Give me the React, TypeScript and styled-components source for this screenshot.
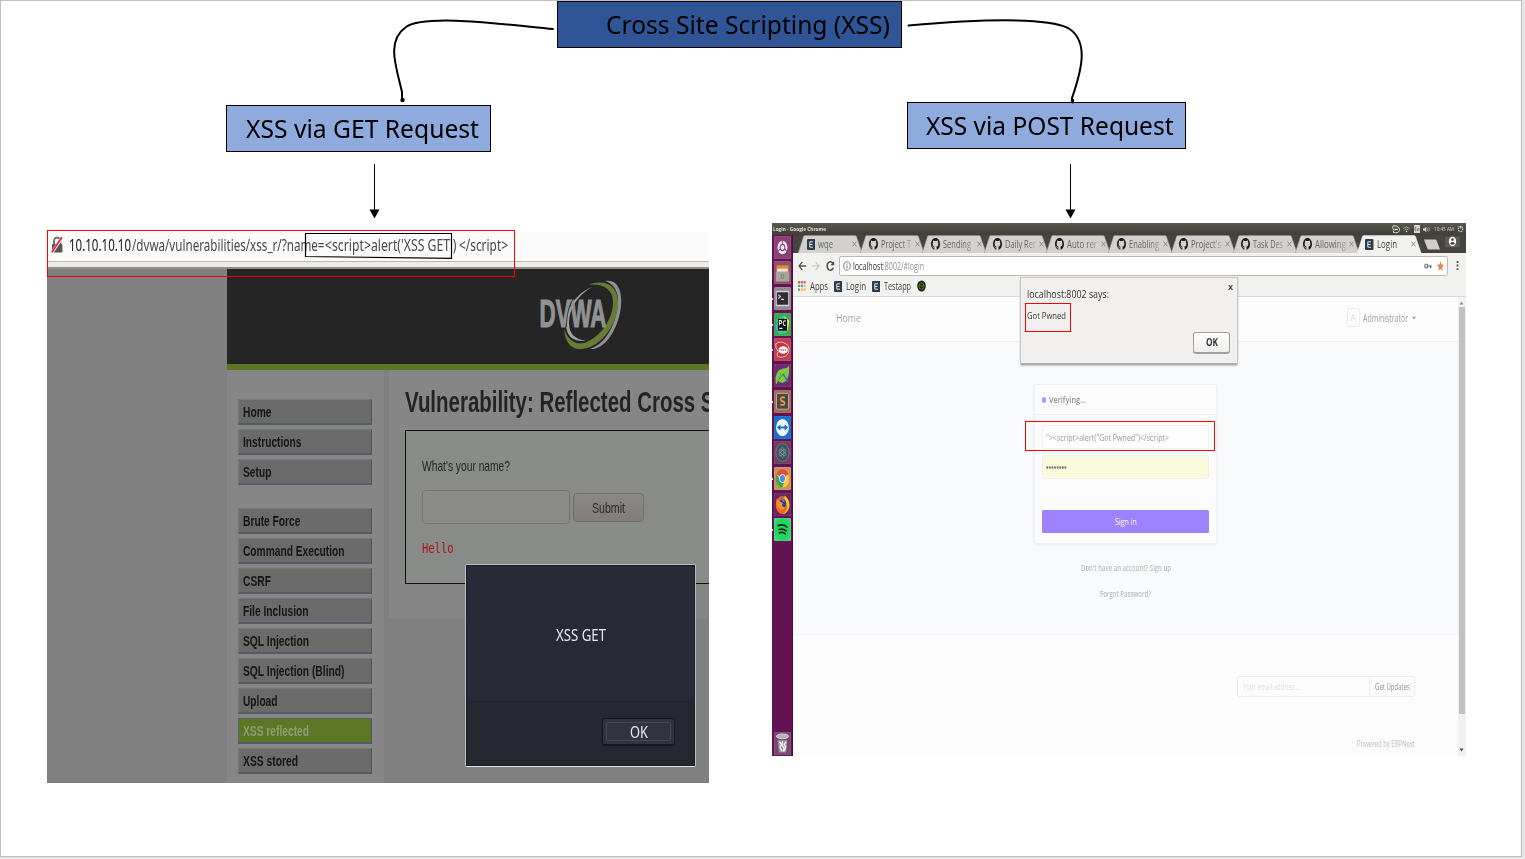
import React, { useLayoutEffect, useRef } from "react";
import styled, { createGlobalStyle, css } from "styled-components";

const GlobalStyle = createGlobalStyle`
  *, *::before, *::after { box-sizing: border-box; }
  html, body { margin: 0; padding: 0; background: #e6e6e6; }
  body { width: 1525px; height: 859px; overflow: hidden; font-family: "Noto Sans", "Open Sans", sans-serif; }
  svg { display: block; flex: none; }
`;

/* ---------- text set to an exact advance width ---------- */

const FitBox = styled.span<{ $w: number }>`
  display: inline-block;
  flex: none;
  width: ${(p) => p.$w}px;
  white-space: pre;
  text-align: left;
`;
const FitInner = styled.span`
  display: inline-block;
  transform-origin: 0 50%;
  white-space: pre;
`;

function Fit({ w, children, className }: { w: number; children: React.ReactNode; className?: string }) {
  const ref = useRef<HTMLSpanElement>(null);
  useLayoutEffect(() => {
    const el = ref.current;
    if (!el) return;
    el.style.transform = "none";
    const natural = el.getBoundingClientRect().width;
    if (natural > 0) el.style.transform = `scaleX(${w / natural})`;
  }, [w, children]);
  return (
    <FitBox $w={w} className={className}>
      <FitInner ref={ref}>{children}</FitInner>
    </FitBox>
  );
}

/* ---------- slide canvas ---------- */

const Slide = styled.main`
  position: relative;
  width: 1522px;
  height: 857px;
  background: #fff;
  border: 1px solid #bfbfbf;
  border-right-color: #b9b9b9;
`;

const Canvas = styled.div`
  position: absolute;
  left: -1px;
  top: -1px;
  width: 1522px;
  height: 857px;
`;

const Node = styled.div<{ $x: number; $y: number; $w: number; $pad: number; $fill: string }>`
  position: absolute;
  left: ${(p) => p.$x}px;
  top: ${(p) => p.$y}px;
  width: ${(p) => p.$w}px;
  height: 47px;
  padding-left: ${(p) => p.$pad}px;
  display: flex;
  align-items: center;
  background: ${(p) => p.$fill};
  border: 1px solid #000;
  color: #000;
  font-size: 25px;
  line-height: 45px;
`;

const Wires = styled.svg`
  position: absolute;
  left: 0;
  top: 0;
`;

const Placed = styled.div<{ $x: number; $y: number }>`
  position: absolute;
  left: ${(p) => p.$x}px;
  top: ${(p) => p.$y}px;
`;

const Highlight = styled.div<{ $x: number; $y: number; $w: number; $h: number }>`
  position: absolute;
  left: ${(p) => p.$x}px;
  top: ${(p) => p.$y}px;
  width: ${(p) => p.$w}px;
  height: ${(p) => p.$h}px;
  border: 1px solid #f80000;
`;

/* ---------- DVWA screenshot ---------- */

const Dvwa = styled.section`
  position: relative;
  width: 662px;
  height: 551px;
  overflow: hidden;
  display: flex;
  flex-direction: column;
  background: #808080;
`;
const UrlBar = styled.div`
  height: 29px;
  flex: none;
  display: flex;
  align-items: center;
  padding: 0 0 3px 4px;
  background: #fcfbfb;
  font-size: 17px;
  line-height: 26px;
  color: #484848;
`;
const UrlHost = styled(Fit)`
  margin: 0 1px 0 5px;
  color: #111;
`;
const UrlTail = styled(Fit)`
  margin-left: 3px;
`;
const ChromeEdge = styled.div`
  height: 8px;
  flex: none;
  background: #efebe7;
  border-top: 1px solid #b8b8b6;
  border-bottom: 2px solid #918e8a;
`;
const Site = styled.div`
  flex: 1;
  margin-left: 180px;
  display: flex;
  flex-direction: column;
`;
const Banner = styled.header`
  height: 101px;
  flex: none;
  background: #252525;
  border-bottom: 6px solid #5c7526;
  padding: 9px 0 0 310px;
`;
const SiteBody = styled.div`
  flex: 1;
  display: flex;
  align-items: stretch;
`;
const Menu = styled.nav`
  width: 157px;
  flex: none;
  background: #868686;
  padding: 29px 0 0 11px;
`;
const MenuGroup = styled.div`
  display: flex;
  flex-direction: column;
  gap: 4px;
  margin-bottom: 23px;
`;
const MenuItem = styled.div<{ $active?: boolean }>`
  width: 134px;
  height: 26px;
  padding-left: 4px;
  font: bold 14.5px/25px "Liberation Sans", sans-serif;
  background: ${(p) => (p.$active ? "#5b7726" : "#6b6b6b")};
  color: ${(p) => (p.$active ? "#8f9c74" : "#151515")};
  border: 1px solid ${(p) => (p.$active ? "#56646a" : "#767676")};
  border-right-color: #4d545e;
  border-bottom: 2px solid #555b66;
`;
const MainCol = styled.div`
  flex: 1;
  height: 248px;
  margin-left: 5px;
  padding: 14px 0 0 16px;
  background: #868686;
`;
const Heading = styled.h1`
  margin: 0 0 10px;
  font: bold 29px/36px "Liberation Sans", sans-serif;
  color: #242424;
`;
const FormPanel = styled.div`
  height: 154px;
  border: 1px solid #101010;
  border-right: 0;
  background: #888b88;
  padding: 24px 0 0 15.5px;
  font: 15px/22px "Liberation Sans", sans-serif;
  color: #242424;
`;
const FormRow = styled.div`
  display: flex;
  align-items: center;
  gap: 3px;
  margin: 12px 0 12px;
  height: 36px;
`;
const NameInput = styled.div`
  width: 148px;
  height: 34px;
  border: 1px solid #75716e;
  border-radius: 4px;
  background: #8b8b8a;
`;
const SubmitButton = styled.div`
  width: 71px;
  height: 29px;
  margin-top: 1px;
  border: 1px solid #716d6a;
  border-radius: 4px;
  background: linear-gradient(#8a8886, #807d7a);
  display: flex;
  justify-content: center;
  line-height: 28px;
  color: #2b2b2b;
`;
const Hello = styled.div`
  font: 14px/22px "DejaVu Sans Mono", monospace;
  color: #a91414;
`;
const Alert = styled.div`
  width: 231px;
  height: 203px;
  display: flex;
  flex-direction: column;
  border: 1px solid #bcbfc0;
  border-bottom-color: #e2e3e3;
  border-radius: 2px;
  background: #282a35;
  color: #e9ebed;
  font-size: 15.5px;
`;
const AlertBody = styled.div`
  height: 137px;
  display: flex;
  align-items: center;
  justify-content: center;
  padding: 2px 0 0 0;
  border: 1px solid #1c1e2a;
  border-bottom: 1px solid #232531;
`;
const AlertFoot = styled.div`
  flex: 1;
  display: flex;
  justify-content: flex-end;
  padding: 16px 19px 0 0;
  background: #252830;
  border: 1px solid #1b1d26;
  border-top: 0;
`;
const AlertOk = styled.div`
  width: 73px;
  height: 28px;
  padding: 3px;
  border: 1px solid #15171c;
  border-bottom-width: 2px;
  border-radius: 3px;
  background: #31343f;
`;
const AlertOkInner = styled.div`
  height: 19px;
  padding-left: 1px;
  border: 1px solid #444957;
  border-radius: 2px;
  display: flex;
  justify-content: center;
  line-height: 18px;
`;

function LockIcon() {
  return (
    <svg width="13" height="18" viewBox="0 0 13 18">
      <path d="M3 8V5.2a3.2 3.6 0 0 1 6.4 0V8" fill="none" stroke="#666" strokeWidth="1.8" />
      <rect x="1" y="8" width="10.4" height="8.4" rx="1" fill="#555" />
      <path d="M1 16.4L11.3 1.4" stroke="#fff" strokeWidth="3" />
      <path d="M.8 16.2L11 1.2" stroke="#e2224c" strokeWidth="1.8" />
    </svg>
  );
}

function DvwaLogo() {
  return (
    <svg width="90" height="76" viewBox="0 0 90 76">
      <path d="M68 3C82 0 88 17 82 39C77 57 66 72 53 71C65 67 75 54 79 37C84 19 80 7 68 3Z" fill="#919191" />
      <path d="M51 7C66 1 80 6 81 23C82 43 66 69 45 71C34 72 28 64 27 51C31 62 38 67 47 65C61 61 76 43 76 24C76 11 65 5 51 7Z" fill="#677d36" />
      <path d="M55 9C41 17 32 30 32 45C32 56 38 61 49 63C36 64 29 58 29 46C29 30 40 15 55 9Z" fill="#a2a2a2" />
      <g transform="translate(2.5 49) scale(1 1.68)" fontFamily="Liberation Sans, sans-serif" fontWeight="bold" fontSize="23">
        <text textLength="67" lengthAdjust="spacingAndGlyphs" fill="#929292" stroke="#929292" strokeWidth=".7">DVWA</text>
      </g>
      <path d="M36 21C32 28 29.5 37 29.5 49" fill="none" stroke="#252525" strokeWidth=".8" />
    </svg>
  );
}

const MENU: [string, number][][] = [
  [["Home", 28.5], ["Instructions", 58.5], ["Setup", 28.5]],
  [
    ["Brute Force", 57.5],
    ["Command Execution", 101.5],
    ["CSRF", 28],
    ["File Inclusion", 65.5],
    ["SQL Injection", 66],
    ["SQL Injection (Blind)", 101.5],
    ["Upload", 34.5],
    ["XSS reflected", 66],
    ["XSS stored", 55],
  ],
];

function DvwaShot() {
  return (
    <Dvwa>
      <UrlBar>
        <LockIcon />
        <UrlHost w={62}>10.10.10.10</UrlHost>
        <Fit w={192.5}>/dvwa/vulnerabilities/xss_r/?name=</Fit>
        <Fit w={131.5}>{"<script>alert('XSS GET')"}</Fit>
        <UrlTail w={49}>{"</script>"}</UrlTail>
      </UrlBar>
      <ChromeEdge />
      <Site>
        <Banner>
          <DvwaLogo />
        </Banner>
        <SiteBody>
          <Menu>
            {MENU.map((group, i) => (
              <MenuGroup key={i}>
                {group.map(([label, w]) => (
                  <MenuItem key={label} $active={label === "XSS reflected"}>
                    <Fit w={w}>{label}</Fit>
                  </MenuItem>
                ))}
              </MenuGroup>
            ))}
          </Menu>
          <MainCol>
            <Heading>
              <Fit w={309.5}>Vulnerability: Reflected Cross S</Fit>
            </Heading>
            <FormPanel>
              <Fit w={88}>What's your name?</Fit>
              <FormRow>
                <NameInput />
                <SubmitButton>
                  <Fit w={33}>Submit</Fit>
                </SubmitButton>
              </FormRow>
              <Hello>
                <Fit w={31.5}>Hello</Fit>
              </Hello>
            </FormPanel>
          </MainCol>
        </SiteBody>
      </Site>
    </Dvwa>
  );
}

/* ---------- Ubuntu desktop with Chrome ---------- */

const Desktop = styled.section`
  width: 694px;
  height: 533px;
  display: flex;
  flex-direction: column;
  font-family: "Open Sans", "Noto Sans", sans-serif;
  overflow: hidden;
`;
const TopBar = styled.div`
  height: 12px;
  flex: none;
  display: flex;
  align-items: center;
  padding: 0 2px 0 1px;
  background: linear-gradient(#5b5a51, #45443e 70%, #3f3e39);
  color: #e4e1d8;
  font-size: 6px;
  font-weight: bold;
  line-height: 11px;
`;
const Tray = styled.div`
  margin-left: auto;
  display: flex;
  align-items: center;
  gap: 3.5px;
  color: #d5d2c9;
  font-weight: normal;
`;
const DesktopRow = styled.div`
  flex: 1;
  display: flex;
  min-height: 0;
`;
const Launcher = styled.aside`
  width: 21px;
  flex: none;
  background: #641253;
  border-right: 1px solid #4f0d41;
  display: flex;
  flex-direction: column;
  align-items: center;
  gap: 2.72px;
  padding: 0.5px 0 1px;
`;
const LauncherIcon = styled.div<{ $bg: string; $last?: boolean; $running?: boolean }>`
  position: relative;
  width: 17px;
  height: 23px;
  flex: none;
  border-radius: 1.5px;
  background: ${(p) => p.$bg};
  box-shadow: inset 0 0 1px rgba(255, 255, 255, 0.55);
  ${(p) => p.$last && css`margin-top: auto;`}
  ${(p) => p.$running && css`
    &::before {
      content: "";
      position: absolute;
      left: -2px;
      top: 11px;
      width: 1.5px;
      height: 2px;
      background: #f0e6ee;
    }
  `}
`;
const Browser = styled.div`
  flex: 1;
  min-width: 0;
  display: flex;
  flex-direction: column;
  background: #f1f1ef;
`;
const TabStrip = styled.div`
  height: 18px;
  flex: none;
  display: flex;
  background: #45443e;
  padding-left: 5px;
`;
const TabShell = styled.div`
  position: relative;
  width: 62.1px;
  height: 18px;
  flex: none;
  font-size: 10.5px;
  line-height: 18px;
`;
const TabShape = styled.svg`
  position: absolute;
  left: 0;
  top: 0;
`;
const TabContent = styled.div<{ $active?: boolean }>`
  position: relative;
  display: flex;
  align-items: center;
  height: 18px;
  padding-left: 8.5px;
  color: ${(p) => (p.$active ? "#444" : "#66645f")};
`;
const TabTitle = styled.div<{ $fade?: boolean }>`
  width: 34px;
  height: 18px;
  margin-left: 3px;
  ${(p) => p.$fade && css`
    -webkit-mask-image: linear-gradient(90deg, #000 60%, rgba(0, 0, 0, 0.15));
    mask-image: linear-gradient(90deg, #000 60%, rgba(0, 0, 0, 0.15));
  `}
`;
const StripEnd = styled.div`
  display: flex;
  gap: 2px;
  padding: 0 0 0 5px;
`;
const Toolbar = styled.div`
  height: 24px;
  flex: none;
  display: flex;
  align-items: center;
  padding: 1px 0 0 5px;
  font-size: 10.5px;
`;
const NavIcons = styled.div`
  width: 41px;
  flex: none;
`;
const Omnibox = styled.div`
  width: 609px;
  height: 20px;
  display: flex;
  align-items: center;
  padding: 0 3px 0 3px;
  border: 1px solid #bbbab6;
  border-radius: 2px;
  background: #fff;
  color: #8e8e8e;
  line-height: 18px;
`;
const OmniHost = styled(Fit)`
  margin-left: 2px;
  color: #333;
`;
const OmniIcons = styled.div`
  margin-left: auto;
  display: flex;
  align-items: center;
  gap: 5px;
`;
const Kebab = styled.div`
  margin-left: 8px;
`;
const Bookmarks = styled.div`
  height: 20px;
  flex: none;
  display: flex;
  align-items: center;
  padding: 0 0 1px 5px;
  border-bottom: 1px solid #d9d9d7;
  font-size: 10.5px;
  line-height: 18px;
  color: #424242;
`;
const BookmarkLabel = styled(Fit)`
  margin: 0 5.5px 0 4px;
`;
const View = styled.div`
  flex: 1;
  display: flex;
  min-height: 0;
`;
const Page = styled.div`
  flex: 1;
  display: flex;
  flex-direction: column;
`;
const PageNav = styled.div`
  height: 45px;
  flex: none;
  display: flex;
  align-items: center;
  padding: 0 42.5px 3px 43px;
  background: #fcfcfc;
  border-bottom: 1px solid #f1f2f4;
  color: #a2a6ab;
  font-size: 11.5px;
`;
const UserMenu = styled.div`
  margin-left: auto;
  display: flex;
  align-items: center;
  gap: 3.5px;
  font-size: 10px;
  color: #9ca1a7;
`;
const Avatar = styled.div`
  width: 13px;
  height: 19px;
  border: 1px solid #eceef0;
  border-radius: 2px;
  display: flex;
  align-items: center;
  justify-content: center;
  font-size: 9px;
  color: #dddfe3;
`;
const Hero = styled.div`
  height: 293px;
  flex: none;
  display: flex;
  flex-direction: column;
  align-items: center;
  padding-top: 42px;
  background: #f9fafc;
  border-bottom: 1px solid #f1f3f6;
  font-size: 9px;
`;
const Card = styled.div`
  width: 183px;
  height: 160px;
  flex: none;
  margin-right: 1px;
  border: 1px solid #eef0f3;
  border-radius: 2px;
  background: #fcfcfd;
  box-shadow: 0 1px 3px rgba(40, 50, 80, 0.07);
`;
const CardHead = styled.div`
  height: 30px;
  display: flex;
  align-items: center;
  gap: 3px;
  padding-left: 7px;
  border-bottom: 1px solid #f0f1f3;
  font-weight: 600;
  color: #8d9298;
`;
const Dot = styled.i`
  width: 4px;
  height: 6px;
  border-radius: 50%;
  background: #ab98fb;
`;
const CardBody = styled.div`
  padding: 10px 7px 0;
`;
const Field = styled.div<{ $fill?: string }>`
  height: 24px;
  margin-bottom: 6px;
  padding: 0 0 0 3px;
  display: flex;
  align-items: center;
  border: 1px solid #eef0f2;
  border-radius: 2px;
  background: ${(p) => p.$fill || "#fdfdfd"};
  color: #989b9f;
`;
const SignIn = styled.div`
  height: 23px;
  margin-top: 31px;
  padding-left: 1px;
  display: flex;
  align-items: center;
  justify-content: center;
  border-radius: 1.5px;
  background: #9f82fd;
  color: #fff;
`;
const HeroLink = styled.div<{ $gap: number }>`
  margin-top: ${(p) => p.$gap}px;
  height: 12px;
  line-height: 12px;
  font-size: 8.5px;
  font-weight: 600;
  color: #b9bdc4;
`;
const Footer = styled.footer`
  flex: 1;
  display: flex;
  flex-direction: column;
  align-items: flex-end;
  padding: 41px 43px 0 0;
  background: #fcfcfc;
  font-size: 9px;
`;
const Subscribe = styled.div`
  width: 178px;
  height: 21px;
  display: flex;
  border: 1px solid #eeeff0;
  border-radius: 1.5px;
  line-height: 19px;
  color: #dddfe2;
`;
const SubInput = styled.div`
  width: 132px;
  padding-left: 5px;
  border-right: 1px solid #eeeff0;
`;
const SubButton = styled.div`
  padding-left: 5px;
  color: #8c9096;
`;
const Powered = styled.div`
  margin-top: 41px;
  font-size: 8.5px;
  line-height: 12px;
  color: #b9bcc1;
`;
const Scrollbar = styled.div`
  width: 8px;
  flex: none;
  display: flex;
  flex-direction: column;
  align-items: center;
  background: #f1f1f1;
  padding: 4px 1px 4px 0;
`;
const Thumb = styled.div`
  width: 6px;
  height: 407px;
  margin-top: 2px;
  background: #c1c1c1;
`;
const DownArrow = styled.div`
  margin-top: auto;
`;

const JsDialog = styled.div`
  width: 218px;
  height: 88px;
  padding: 8px 7px 0 6px;
  display: flex;
  flex-direction: column;
  border: 1px solid #c6c5c3;
  border-bottom: 2px solid #aeadab;
  border-radius: 1px 1px 2px 2px;
  background: #f1f0ee;
  box-shadow: 0 1px 2px rgba(0, 0, 0, 0.22);
  font-family: "Open Sans", sans-serif;
  color: #363636;
`;
const JsTitle = styled.div`
  display: flex;
  justify-content: space-between;
  font-size: 11.5px;
  line-height: 16px;
`;
const JsClose = styled.span`
  margin: -7px -3px 0 0;
  font-size: 9px;
  font-weight: 600;
`;
const JsText = styled.div`
  margin-top: 7px;
  font-size: 9.5px;
  line-height: 14px;
`;
const JsOk = styled.div`
  align-self: flex-end;
  width: 37px;
  height: 22px;
  margin-top: 9px;
  border: 1px solid #a09f9d;
  border-bottom-width: 2px;
  border-radius: 3px;
  background: linear-gradient(#fdfdfd, #eeeeed);
  display: flex;
  justify-content: center;
  font-size: 10px;
  font-weight: bold;
  line-height: 19px;
`;

function GithubMark() {
  return (
    <svg width="9" height="12" viewBox="0 0 16 16" preserveAspectRatio="none">
      <path fill="#1b1b1b" d="M8 0C3.58 0 0 3.58 0 8c0 3.54 2.29 6.53 5.47 7.59.4.07.55-.17.55-.38v-1.49c-2.01.37-2.53-.49-2.69-.94-.09-.23-.48-.94-.82-1.13-.28-.15-.68-.52-.01-.53.63-.01 1.08.58 1.23.82.72 1.21 1.87.87 2.33.66.07-.52.28-.87.51-1.07-1.78-.2-3.64-.89-3.64-3.95 0-.87.31-1.59.82-2.15-.08-.2-.36-1.02.08-2.12 0 0 .67-.21 2.2.82A7.7 7.7 0 0 1 8 3.86c.68 0 1.36.09 2 .27 1.53-1.04 2.2-.82 2.2-.82.44 1.1.16 1.92.08 2.12.51.56.82 1.27.82 2.15 0 3.07-1.87 3.75-3.65 3.95.29.25.54.73.54 1.48v2.2c0 .21.15.46.55.38A8 8 0 0 0 16 8c0-4.42-3.58-8-8-8z" />
    </svg>
  );
}

function EMark() {
  return (
    <svg width="8.5" height="11" viewBox="0 0 8.5 11">
      <rect width="8.5" height="11" rx="1" fill="#303c4c" />
      <path d="M6 2.8H2.8v5.4H6M2.8 5.5h2.8" fill="none" stroke="#dfe4ea" strokeWidth="1" />
    </svg>
  );
}

function CloseX() {
  return (
    <svg width="5" height="6" viewBox="0 0 5 6">
      <path d="M.5.6l4 4.8M4.5.6l-4 4.8" stroke="#85837e" strokeWidth=".9" />
    </svg>
  );
}

const TABS: { title: string; w: number; e?: boolean; fade?: boolean; active?: boolean }[] = [
  { title: "wqe", w: 15, e: true },
  { title: "Project T", w: 30, fade: true },
  { title: "Sending", w: 28, fade: true },
  { title: "Daily Rer", w: 31, fade: true },
  { title: "Auto rer", w: 30, fade: true },
  { title: "Enabling", w: 30, fade: true },
  { title: "Project's", w: 30, fade: true },
  { title: "Task Des", w: 30, fade: true },
  { title: "Allowing", w: 31, fade: true },
  { title: "Login", w: 20, e: true, active: true },
];

function Tab({ tab }: { tab: (typeof TABS)[number] }) {
  return (
    <TabShell>
      <TabShape width="65" height="18" viewBox="0 0 65 18">
        <path
          d="M0 18.5L5.5 1.6Q6 .6 7 .6H57Q58 .6 58.5 1.6L64.3 18.5Z"
          fill={tab.active ? "#f1f1ef" : "#d3d1cd"}
          stroke={tab.active ? "#f1f1ef" : "#8e8c86"}
          strokeWidth=".5"
        />
      </TabShape>
      <TabContent $active={tab.active}>
        {tab.e ? <EMark /> : <GithubMark />}
        <TabTitle $fade={tab.fade}>
          <Fit w={tab.w}>{tab.title}</Fit>
        </TabTitle>
        <CloseX />
      </TabContent>
    </TabShell>
  );
}

const APP_TILES: { name: string; bg: string; running?: boolean; last?: boolean; art: React.ReactNode }[] = [
  {
    name: "dash",
    bg: "#8a4079",
    art: (
      <>
        <circle cx="24" cy="24" r="14" fill="#f3eaf1" />
        <circle cx="24" cy="24" r="6.5" fill="none" stroke="#8a4079" strokeWidth="3" />
        <path d="M24 10v7M12 31l6-4M36 31l-6-4" stroke="#8a4079" strokeWidth="2.5" />
      </>
    ),
  },
  {
    name: "files",
    bg: "#8c5268",
    art: (
      <>
        <path d="M7 9h34v14H7z" fill="#e38742" />
        <path d="M9 16h30v7H9z" fill="#f3e6d6" />
        <path d="M5 22h38v21H5z" fill="#a9a39d" />
        <circle cx="24" cy="32" r="4" fill="none" stroke="#77726d" strokeWidth="2" />
      </>
    ),
  },
  {
    name: "terminal",
    bg: "#8f8794",
    running: true,
    art: (
      <>
        <rect x="5" y="8" width="38" height="32" rx="2" fill="#d5d2d3" />
        <rect x="8" y="11" width="32" height="26" fill="#2f2d30" />
        <path d="M12 16l6 4-6 4M20 26h8" fill="none" stroke="#e9e9e9" strokeWidth="2.5" />
      </>
    ),
  },
  {
    name: "pycharm",
    bg: "#38a852",
    running: true,
    art: (
      <>
        <path d="M6 14L28 5l14 10-6 26-20 3z" fill="#2fd58d" />
        <path d="M30 7l13 9-4 22-12-14z" fill="#e5ef52" />
        <path d="M5 26l14-7 3 24-14-5z" fill="#45bedb" />
        <rect x="11" y="12" width="26" height="25" fill="#111" />
        <path d="M15 26V16h4q3 0 3 3t-3 3h-4M33 17q-7-2-7 4t7 4M15 32h9" fill="none" stroke="#fff" strokeWidth="2.4" />
      </>
    ),
  },
  {
    name: "chat",
    bg: "#bb4351",
    running: true,
    art: (
      <>
        <path d="M5 12q18-9 36 5 5 14-9 21-16 5-24-2l4-7Q3 20 5 12z" fill="#c9303c" stroke="#eedcdd" strokeWidth="2" />
        <ellipse cx="26" cy="25" rx="13" ry="8" fill="#fff" />
        <circle cx="20" cy="25" r="1.8" fill="#c9303c" />
        <circle cx="26" cy="25" r="1.8" fill="#c9303c" />
        <circle cx="32" cy="25" r="1.8" fill="#c9303c" />
      </>
    ),
  },
  {
    name: "leaf",
    bg: "#6d2c6b",
    art: (
      <>
        <path d="M5 40Q1 14 23 10q12 0 20-6 1 34-20 35-9 0-12-4l-3 7z" fill="#7ec84b" />
        <path d="M9 36L30 18M18 19l3 8M14 26l2 5" stroke="#4d932c" strokeWidth="2" fill="none" />
        <path d="M24 22l14 16 3-3-14-15z" fill="#3d74b4" />
      </>
    ),
  },
  {
    name: "sublime",
    bg: "#a06f48",
    running: true,
    art: (
      <>
        <rect x="7" y="7" width="34" height="33" rx="3" fill="#484646" stroke="#c4bdb6" strokeWidth="2" />
        <path d="M31 16q-12-3-12 3 0 4 6 5t5 4q-1 5-12 2" fill="none" stroke="#f09a3a" strokeWidth="4" />
      </>
    ),
  },
  {
    name: "teamviewer",
    bg: "#1670cf",
    art: (
      <>
        <circle cx="24" cy="24" r="18" fill="#f6fafd" />
        <path d="M8 24l10-7v5h12v-5l10 7-10 7v-5H18v5z" fill="#1670cf" />
      </>
    ),
  },
  {
    name: "atom",
    bg: "#6c3f6b",
    art: (
      <>
        <circle cx="24" cy="24" r="19" fill="#44525c" stroke="#77808a" strokeWidth="2" />
        <g fill="none" stroke="#83a6ac" strokeWidth="1.4">
          <ellipse cx="24" cy="24" rx="4" ry="11" />
          <ellipse cx="24" cy="24" rx="4" ry="11" transform="rotate(60 24 24)" />
          <ellipse cx="24" cy="24" rx="4" ry="11" transform="rotate(120 24 24)" />
        </g>
      </>
    ),
  },
  {
    name: "chrome",
    bg: "#c0995a",
    running: true,
    art: (
      <>
        <circle cx="24" cy="24" r="19" fill="#fbc92d" />
        <path d="M24 24L7.5 14.5A19 19 0 0 1 40.5 14.5z" fill="#e44b3c" />
        <path d="M7.5 14.5A19 19 0 0 0 24 43l6-16-14-1z" fill="#38a556" />
        <circle cx="24" cy="24" r="9" fill="#fff" />
        <circle cx="24" cy="24" r="7.3" fill="#4a8af0" />
      </>
    ),
  },
  {
    name: "firefox",
    bg: "#6a2663",
    art: (
      <>
        <circle cx="24" cy="25" r="19" fill="#f1641f" />
        <path d="M30 5q16 9 13 24-4 13-19 15 14-6 13-17-1-9-8-14z" fill="#fdc52c" />
        <circle cx="25" cy="22" r="9" fill="#2e3d93" />
        <path d="M7 13q7 1 11 6l8 2-4 4q2 6 10 4-6 9-15 5Q5 29 7 13z" fill="#fb9129" />
        <path d="M20 10l6 2 5 7-6-1z" fill="#3f8fe0" />
      </>
    ),
  },
  {
    name: "spotify",
    bg: "radial-gradient(#1ed760 55%, #6bcf92)",
    running: true,
    art: (
      <path d="M12 16q14-4 25 3M14 24q11-3 21 3M15 31q10-3 17 2" fill="none" stroke="#16251b" strokeWidth="3.6" strokeLinecap="round" />
    ),
  },
  {
    name: "trash",
    bg: "#77476f",
    last: true,
    art: (
      <>
        <ellipse cx="24" cy="9" rx="17" ry="5" fill="#b9b2b8" stroke="#e6e2e5" strokeWidth="2" />
        <path d="M10 17h28l-4 26H14z" fill="#9a929a" />
        <path d="M15 20l6 6-4 6 6 8M24 19l-1 9 5 5-2 8M34 20l-5 6 4 5-4 9" fill="none" stroke="#f0eef0" strokeWidth="3.5" />
      </>
    ),
  },
];

function DesktopShot() {
  return (
    <Desktop>
      <TopBar>
        <Fit w={53}>Login - Google Chrome</Fit>
        <Tray>
          <svg width="8" height="9" viewBox="0 0 8 9">
            <path d="M1 .8q4-.6 6 2t-1 4.6Q3 8.5 1 7l1-1.4Q0 3 1 .8z" fill="none" stroke="#e8e5dd" strokeWidth=".9" />
            <path d="M2.6 4.4h3" stroke="#fff" strokeWidth="1.2" />
          </svg>
          <svg width="7" height="7" viewBox="0 0 7 7">
            <path d="M.3 2.4q3.2-2.8 6.4 0M1.5 4q2-1.7 4 0" fill="none" stroke="#aaa79f" />
            <circle cx="3.5" cy="5.5" r=".8" fill="#ddd" />
          </svg>
          <svg width="6" height="8" viewBox="0 0 6 8">
            <rect width="6" height="8" rx=".6" fill="#dedbd2" />
            <path d="M2.5 2.2H1v3.6h1.5M1 4h1.3M3.6 6V3.6h1.4V6" fill="none" stroke="#55534c" strokeWidth=".6" />
          </svg>
          <svg width="7" height="7" viewBox="0 0 7 7">
            <path d="M0 2.4h1.4L3.3.7v5.6L1.4 4.6H0z" fill="#d8d5cc" />
            <path d="M4.4 2q1 1.5 0 3M5.6 1q1.6 2.5 0 5" fill="none" stroke="#b5b2aa" strokeWidth=".7" />
          </svg>
          <Fit w={20}>10:45 AM</Fit>
          <svg width="7" height="8" viewBox="0 0 7 8">
            <ellipse cx="3.5" cy="4" rx="2.2" ry="2.7" fill="none" stroke="#c9c6bd" strokeWidth="1.2" strokeDasharray="1.3 .5" />
            <path d="M3.5 1v2.6" stroke="#e0ddd5" strokeWidth=".8" />
          </svg>
        </Tray>
      </TopBar>
      <DesktopRow>
        <Launcher>
          {APP_TILES.map((t) => (
            <LauncherIcon key={t.name} $bg={t.bg} $running={t.running} $last={t.last}>
              <svg width="17" height="23" viewBox="0 0 48 48" preserveAspectRatio="none">
                {t.art}
              </svg>
            </LauncherIcon>
          ))}
        </Launcher>
        <Browser>
          <TabStrip>
            {TABS.map((t) => (
              <Tab key={t.title} tab={t} />
            ))}
            <StripEnd>
              <svg width="18" height="18" viewBox="0 0 18 18">
                <path d="M0 4.5h11.5q.7 0 1 .7L16 14.5H4.5q-.8 0-1-.8z" fill="#cfcdc8" />
              </svg>
              <svg width="17" height="18" viewBox="0 0 17 18">
                <rect x="1" y="1.5" width="15" height="11" rx="1.5" fill="#5b5a54" />
                <ellipse cx="8.5" cy="6.5" rx="3.6" ry="4.8" fill="#fff" />
                <circle cx="8.5" cy="4.6" r="1.3" fill="#44433e" />
                <path d="M6.2 9q0-2 2.3-2t2.3 2q-2.3 1.5-4.6 0z" fill="#44433e" />
              </svg>
            </StripEnd>
          </TabStrip>
          <Toolbar>
            <NavIcons>
              <svg width="37" height="12" viewBox="0 0 37 12">
                <path d="M8 6H1.2M4.4 1.8L1 6l3.4 4.2" fill="none" stroke="#555" strokeWidth="1.3" />
                <path d="M14 6h6.8M17.6 1.8L21 6l-3.4 4.2" fill="none" stroke="#c5c4c1" strokeWidth="1.2" />
                <path d="M35 3.6A3.2 4.2 0 1 0 35.3 7.7" fill="none" stroke="#4a4a4a" strokeWidth="1.5" />
                <path d="M36.2 1v4.2h-3.8z" fill="#4a4a4a" />
              </svg>
            </NavIcons>
            <Omnibox>
              <svg width="8" height="10" viewBox="0 0 8 10">
                <ellipse cx="4" cy="5" rx="3.3" ry="4.2" fill="none" stroke="#666" strokeWidth=".8" />
                <path d="M4 4.4v3M4 2.5v1" stroke="#666" strokeWidth=".9" />
              </svg>
              <OmniHost w={30}>localhost</OmniHost>
              <Fit w={41}>:8002/#login</Fit>
              <OmniIcons>
                <svg width="8" height="8" viewBox="0 0 8 8">
                  <ellipse cx="2.3" cy="4" rx="1.5" ry="2" fill="none" stroke="#606060" strokeWidth="1.1" />
                  <path d="M3.8 4h4M6.6 4v2" stroke="#606060" strokeWidth="1.2" />
                </svg>
                <svg width="7" height="10" viewBox="0 0 20 20" preserveAspectRatio="none">
                  <path d="M10 0l3 7 7 .6-5.4 4.8L16.5 20 10 15.6 3.5 20l1.9-7.6L0 7.6 7 7z" fill="#e9804f" />
                </svg>
              </OmniIcons>
            </Omnibox>
            <Kebab>
              <svg width="3" height="11" viewBox="0 0 3 11">
                <path d="M.6 1h1.8v1.900H.6zM.6 4.6h1.8v1.900H.6zM.6 8.2h1.8v1.900H.6z" fill="#555" />
              </svg>
            </Kebab>
          </Toolbar>
          <Bookmarks>
            <svg width="8" height="10" viewBox="0 0 8 10">
              <path d="M0 0h2v2.4H0zM2.8 0h2v2.4h-2zM5.6 0h2v2.4h-2z" fill="#e2574c" />
              <path d="M0 3.7h2v2.4H0z" fill="#4fae5d" />
              <path d="M2.8 3.7h2v2.4h-2z" fill="#4a86e0" />
              <path d="M5.6 3.7h2v2.4h-2zM2.8 7.4h2v2.4h-2zM5.6 7.4h2v2.4h-2z" fill="#efb93a" />
              <path d="M0 7.4h2v2.4H0z" fill="#4fae5d" />
            </svg>
            <BookmarkLabel w={18}>Apps</BookmarkLabel>
            <EMark />
            <BookmarkLabel w={20}>Login</BookmarkLabel>
            <EMark />
            <BookmarkLabel w={27}>Testapp</BookmarkLabel>
            <svg width="9" height="12" viewBox="0 0 9 12">
              <ellipse cx="4.5" cy="6" rx="4.3" ry="5.5" fill="#1b2412" />
              <ellipse cx="4.5" cy="6.2" rx="2.5" ry="3" fill="none" stroke="#6d9b25" strokeWidth=".7" />
              <path d="M2.6 6h3.8" stroke="#6d9b25" strokeWidth=".8" />
            </svg>
          </Bookmarks>
          <View>
            <Page>
              <PageNav>
                <Fit w={25}>Home</Fit>
                <UserMenu>
                  <Avatar>A</Avatar>
                  <Fit w={45}>Administrator</Fit>
                  <svg width="4" height="4" viewBox="0 0 4 4">
                    <path d="M0 .8h4L2 3.6z" fill="#999da2" />
                  </svg>
                </UserMenu>
              </PageNav>
              <Hero>
                <Card>
                  <CardHead>
                    <Dot />
                    <Fit w={37}>Verifying...</Fit>
                  </CardHead>
                  <CardBody>
                    <Field>
                      <Fit w={123}>{'"><script>alert("Got Pwned")</script>'}</Fit>
                    </Field>
                    <Field $fill="#f9fbdc">
                      <svg width="21" height="5" viewBox="0 0 21 5">
                        {Array.from({ length: 8 }, (_, i) => (
                          <ellipse key={i} cx={1.2 + i * 2.6} cy="2.5" rx="1" ry="1.3" fill="#74766a" />
                        ))}
                      </svg>
                    </Field>
                    <SignIn>
                      <Fit w={22}>Sign in</Fit>
                    </SignIn>
                  </CardBody>
                </Card>
                <HeroLink $gap={18}>
                  <Fit w={90}>Don't have an account? Sign up</Fit>
                </HeroLink>
                <HeroLink $gap={14}>
                  <Fit w={51}>Forgot Password?</Fit>
                </HeroLink>
              </Hero>
              <Footer>
                <Subscribe>
                  <SubInput>
                    <Fit w={57}>Your email address...</Fit>
                  </SubInput>
                  <SubButton>
                    <Fit w={35}>Get Updates</Fit>
                  </SubButton>
                </Subscribe>
                <Powered>
                  <Fit w={58}>Powered by ERPNext</Fit>
                </Powered>
              </Footer>
            </Page>
            <Scrollbar>
              <svg width="5" height="4" viewBox="0 0 5 4">
                <path d="M.5 3.5h4L2.5.5z" fill="#8d8d8d" />
              </svg>
              <Thumb />
              <DownArrow>
                <svg width="5" height="4" viewBox="0 0 5 4">
                  <path d="M.5.5h4L2.5 3.5z" fill="#444" />
                </svg>
              </DownArrow>
            </Scrollbar>
          </View>
        </Browser>
      </DesktopRow>
    </Desktop>
  );
}

export default function App() {
  return (
    <>
      <GlobalStyle />
      <Slide>
        <Canvas>
          <Node $x={557} $y={1} $w={345} $pad={47.5} $fill="#2f5597">
            <Fit w={284}>Cross Site Scripting (XSS)</Fit>
          </Node>
          <Node $x={226} $y={105} $w={265} $pad={18.5} $fill="#8faadc">
            <Fit w={233}>XSS via GET Request</Fit>
          </Node>
          <Node $x={907} $y={102} $w={279} $pad={18} $fill="#8faadc">
            <Fit w={247.5}>XSS via POST Request</Fit>
          </Node>

          <Placed $x={47} $y={232}>
            <DvwaShot />
          </Placed>
          <Placed $x={465} $y={564}>
            <Alert>
              <AlertBody>
                <Fit w={50}>XSS GET</Fit>
              </AlertBody>
              <AlertFoot>
                <AlertOk>
                  <AlertOkInner>
                    <Fit w={18}>OK</Fit>
                  </AlertOkInner>
                </AlertOk>
              </AlertFoot>
            </Alert>
          </Placed>

          <Placed $x={772} $y={223}>
            <DesktopShot />
          </Placed>
          <Placed $x={1020} $y={277}>
            <JsDialog>
              <JsTitle>
                <Fit w={82}>localhost:8002 says:</Fit>
                <JsClose>x</JsClose>
              </JsTitle>
              <JsText>
                <Fit w={39}>Got Pwned</Fit>
              </JsText>
              <JsOk>
                <Fit w={12}>OK</Fit>
              </JsOk>
            </JsDialog>
          </Placed>

          <Wires width="1522" height="857" viewBox="0 0 1522 857">
            <g fill="none" stroke="#000" strokeWidth="2" strokeLinecap="round">
              <path d="M553 29C500 24 425 14 406 27C386 41 396 66 402 92V101" />
              <path d="M908.5 25.5C960 21 1043 16 1068 28C1090 41 1081 72 1072 98L1072.5 102.5" />
            </g>
            <circle cx="402.5" cy="100" r="2.2" />
            <circle cx="1072.5" cy="100.5" r="1.8" />
            <path d="M374.5 164V211M1070.5 164V211" stroke="#000" />
            <path d="M369.5 209.5h10l-5 9zM1065.5 209.5h10l-5 9z" />
            <path d="M305.5 233.5H451.5V258.3L305.5 256.5Z" fill="none" stroke="#000" strokeWidth="1.2" />
          </Wires>
          <Highlight $x={47} $y={230} $w={468} $h={47} />
          <Highlight $x={1025} $y={303} $w={46} $h={29} />
          <Highlight $x={1025} $y={421} $w={190} $h={30} />
        </Canvas>
      </Slide>
    </>
  );
}
